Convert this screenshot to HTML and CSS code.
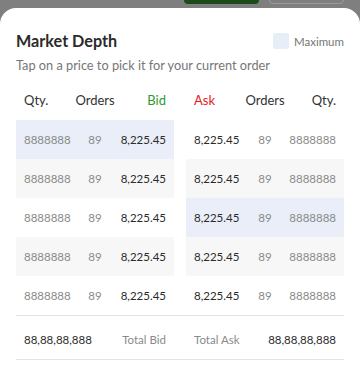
FILE: index.html
```html
<!DOCTYPE html>
<html>
<head>
<meta charset="utf-8">
<link rel="stylesheet" href="styles.css">
</head>
<body>
<div class="behind">
  <div class="btn btn-buy"></div>
  <div class="btn btn-outline"></div>
</div>
<div class="sheet">
  <div class="head">
    <h1 class="title">Market Depth</h1>
    <label class="max"><span class="box"></span><span class="max-text">Maximum</span></label>
  </div>
  <p class="sub">Tap on a price to pick it for your current order</p>

  <div class="book">
    <div class="side side-bid">
      <div class="row hdr"><span class="c1">Qty.</span><span class="c2">Orders</span><span class="c3 bid">Bid</span></div>
      <div class="row sel"><span class="c1 q">8888888</span><span class="c2 o">89</span><span class="c3 p">8,225.45</span></div>
      <div class="row alt"><span class="c1 q">8888888</span><span class="c2 o">89</span><span class="c3 p">8,225.45</span></div>
      <div class="row"><span class="c1 q">8888888</span><span class="c2 o">89</span><span class="c3 p">8,225.45</span></div>
      <div class="row alt"><span class="c1 q">8888888</span><span class="c2 o">89</span><span class="c3 p">8,225.45</span></div>
      <div class="row"><span class="c1 q">8888888</span><span class="c2 o">89</span><span class="c3 p">8,225.45</span></div>
    </div>
    <div class="side side-ask">
      <div class="row hdr"><span class="c1 ask">Ask</span><span class="c2">Orders</span><span class="c3">Qty.</span></div>
      <div class="row"><span class="c1 p">8,225.45</span><span class="c2 o">89</span><span class="c3 q">8888888</span></div>
      <div class="row alt"><span class="c1 p">8,225.45</span><span class="c2 o">89</span><span class="c3 q">8888888</span></div>
      <div class="row sel"><span class="c1 p">8,225.45</span><span class="c2 o">89</span><span class="c3 q">8888888</span></div>
      <div class="row alt"><span class="c1 p">8,225.45</span><span class="c2 o">89</span><span class="c3 q">8888888</span></div>
      <div class="row"><span class="c1 p">8,225.45</span><span class="c2 o">89</span><span class="c3 q">8888888</span></div>
    </div>
  </div>

  <div class="totals">
    <div class="tot-side">
      <span class="tv">88,88,88,888</span><span class="tl">Total Bid</span>
    </div>
    <div class="tot-side">
      <span class="tl">Total Ask</span><span class="tv">88,88,88,888</span>
    </div>
  </div>
</div>
</body>
</html>
```

FILE: styles.css
```css
* { box-sizing: border-box; }
html, body {
  margin: 0;
  padding: 0;
  width: 360px;
  height: 392px;
  overflow: hidden;
}
body {
  background: #7f7f7f;
  font-family: Lato, "Noto Sans", sans-serif;
  display: flex;
  flex-direction: column;
}
.behind {
  height: 8px;
  overflow: hidden;
  display: flex;
  align-items: flex-end;
  padding: 0 17px 4px 184px;
  gap: 10px;
  flex: none;
}
.btn {
  height: 36px;
  flex: none;
  border-radius: 4px;
}
.btn-buy {
  width: 75px;
  background: #1b4a1b;
}
.btn-outline {
  width: 75px;
  border: 1px solid #9a9a9a;
  background: #7f7f7f;
}
.sheet {
  flex: 1;
  background: #fff;
  border-radius: 16px 16px 0 0;
  padding: 21px 16px 0;
}
.head {
  display: flex;
  align-items: center;
  justify-content: space-between;
  height: 24px;
}
.title {
  margin: 0;
  font-size: 16.2px;
  line-height: 24px;
  font-weight: 700;
  color: #2b2b2b;
}
.max {
  display: flex;
  align-items: center;
  gap: 5px;
}
.box {
  width: 16px;
  height: 16px;
  border-radius: 2px;
  background: #e8eef8;
}
.max-text {
  font-size: 11.5px;
  color: #767676;
}
.sub {
  margin: 4px 0 0;
  font-size: 12.75px;
  line-height: 16px;
  color: #767676;
}
.book {
  margin-top: 7px;
  display: grid;
  grid-template-columns: 1fr 1fr;
  column-gap: 12px;
}
.row {
  display: grid;
  grid-template-columns: 1fr auto 1fr;
  align-items: center;
  height: 39px;
  padding: 0 8px;
  font-size: 11.5px;
}
.row.hdr {
  height: 40px;
  font-size: 13px;
  color: #333;
}
.row.alt { background: #f7f7f7; }
.row.sel { background: #e9eef8; }
.c1 { justify-self: start; }
.c2 { justify-self: center; }
.c3 { justify-self: end; }
.bid { color: #2e9a2e; }
.ask { color: #e8191f; }
.q { color: #8a8a8a; }
.o { color: #8a8a8a; }
.p { color: #2b2b2b; }
.totals {
  border-top: 1px solid #e3e3e3;
  border-bottom: 1px solid #e3e3e3;
  display: grid;
  grid-template-columns: 1fr 1fr;
  column-gap: 12px;
  padding: 16px 0 11px;
}
.tot-side {
  display: flex;
  align-items: center;
  justify-content: space-between;
  padding: 0 8px;
  font-size: 11.5px;
  line-height: 16px;
}
.tv { color: #2b2b2b; }
.tl { color: #8a8a8a; }
```
